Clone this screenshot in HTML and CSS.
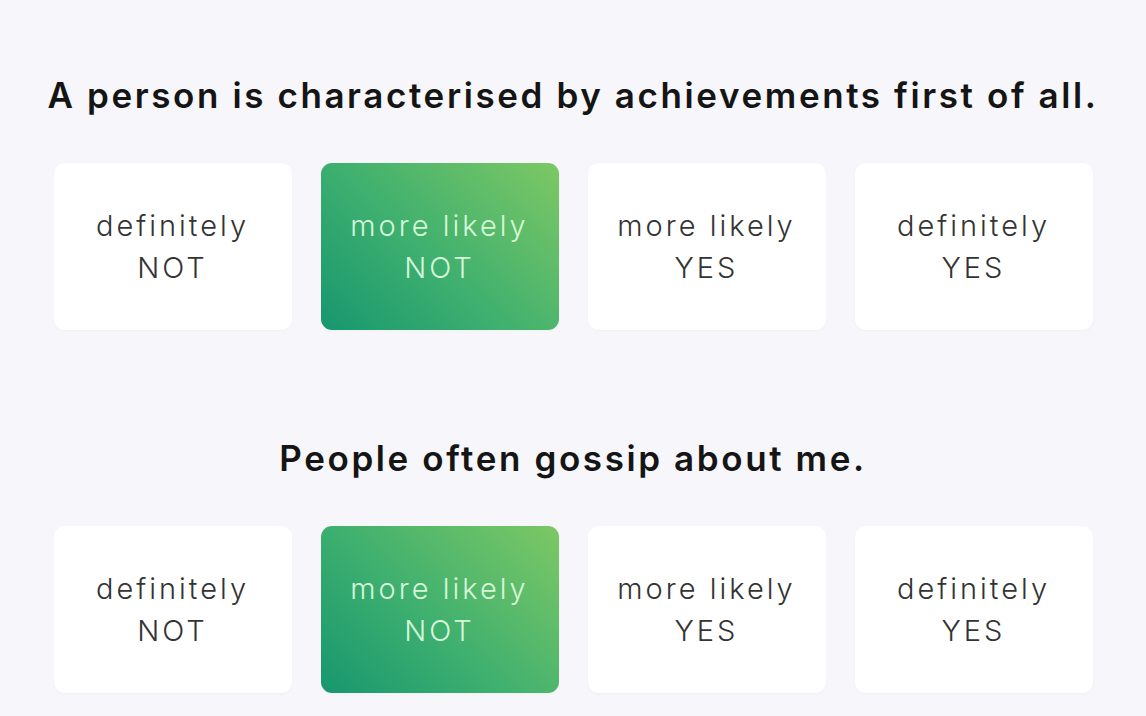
FILE: index.html
```html
<!DOCTYPE html>
<html lang="en">
<head>
<meta charset="utf-8">
<title>Survey</title>
<link rel="stylesheet" href="styles.css">
</head>
<body>
<main class="survey">
  <section class="question">
    <h2 class="question-title">A person is characterised by achievements first of all.</h2>
    <div class="options">
      <div class="option">definitely<br>NOT</div>
      <div class="option option-active">more likely<br>NOT</div>
      <div class="option">more likely<br>YES</div>
      <div class="option">definitely<br>YES</div>
    </div>
  </section>
  <section class="question">
    <h2 class="question-title">People often gossip about me.</h2>
    <div class="options">
      <div class="option">definitely<br>NOT</div>
      <div class="option option-active">more likely<br>NOT</div>
      <div class="option">more likely<br>YES</div>
      <div class="option">definitely<br>YES</div>
    </div>
  </section>
</main>
</body>
</html>
```
FILE: styles.css
```css
html, body {
  margin: 0;
  padding: 0;
}
body {
  background: #f7f7fb;
  font-family: "Inter", "Open Sans", sans-serif;
  color: #1c1c1c;
  width: 1146px;
  height: 716px;
  overflow: hidden;
}
.survey {
  display: flex;
  flex-direction: column;
  align-items: center;
  padding-top: 73px;
  gap: 106px;
}
.question {
  display: flex;
  flex-direction: column;
  align-items: center;
  gap: 46px;
}
.question-title {
  margin: 0;
  font-size: 35px;
  line-height: 44px;
  font-weight: 600;
  letter-spacing: 2.6px;
  color: #151515;
  white-space: nowrap;
}
.options {
  display: flex;
  gap: 29px;
}
.option {
  width: 238px;
  height: 167px;
  box-sizing: border-box;
  background: #ffffff;
  border-radius: 11px;
  display: flex;
  align-items: center;
  justify-content: center;
  text-align: center;
  font-size: 29px;
  line-height: 42px;
  font-weight: 300;
  letter-spacing: 3px;
  color: #333333;
  box-shadow: 0 1px 3px rgba(30, 40, 80, 0.04);
}
.option-active {
  background: linear-gradient(45deg, #17976f 0%, #3fb06f 45%, #7dc864 100%);
  color: #d6f7d8;
}
```
